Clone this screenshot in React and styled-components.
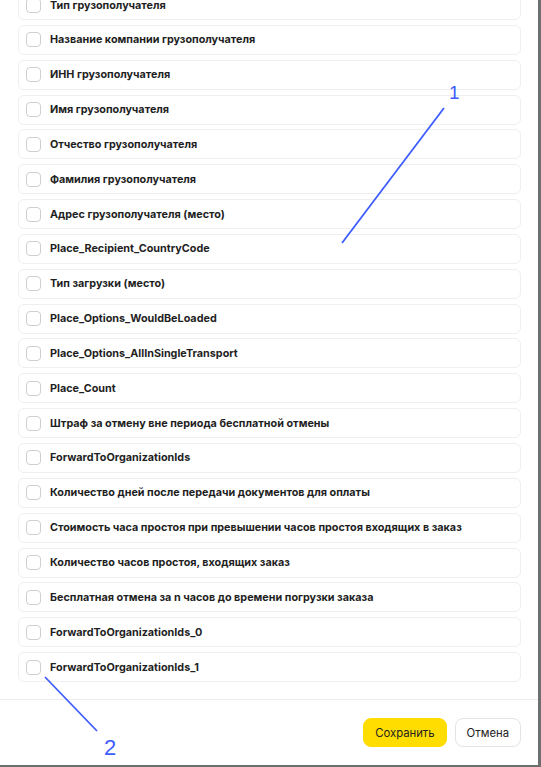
import React, { useEffect, useRef } from "react";
import styled, { createGlobalStyle } from "styled-components";

const GlobalStyle = createGlobalStyle`
  html, body {
    margin: 0;
    padding: 0;
    background: #6e6e6e;
    font-family: Inter, "Open Sans", "Liberation Sans", sans-serif;
  }
`;

const Modal = styled.div`
  position: relative;
  width: 538px;
  height: 765px;
  background: #ffffff;
  display: flex;
  flex-direction: column;
  overflow: hidden;
`;

const ScrollArea = styled.div`
  flex: 1;
  overflow: hidden;
  border-bottom: 1px solid #ececec;
`;

const FieldList = styled.div`
  display: flex;
  flex-direction: column;
  gap: 4.85px;
  padding: 0 17px 19px 18px;
`;

const FieldRow = styled.label`
  display: flex;
  align-items: center;
  gap: 9px;
  height: 30px;
  box-sizing: border-box;
  padding: 0 7px;
  border: 1px solid #efefef;
  border-radius: 6px;
  cursor: pointer;
`;

const Box = styled.span`
  width: 15px;
  height: 15px;
  box-sizing: border-box;
  border: 1px solid #cfcfcf;
  border-radius: 4px;
  flex: none;
  background: #fff;
`;

const FieldLabel = styled.span`
  font-size: 10.8px;
  font-weight: 700;
  color: #1f1f1f;
  white-space: nowrap;
`;

const Footer = styled.div`
  height: 65px;
  display: flex;
  align-items: center;
  justify-content: flex-end;
  gap: 8px;
  padding: 0 17px;
`;

const Button = styled.button`
  height: 29px;
  padding: 0 11px;
  border-radius: 8px;
  border: 1px solid ${p => (p.$primary ? "#ffdd00" : "#e4e4e4")};
  background: ${p => (p.$primary ? "#ffdd00" : "#ffffff")};
  color: #222;
  font-family: Inter, "Open Sans", sans-serif;
  font-size: 11.3px;
  font-weight: 400;
  cursor: pointer;
`;

const Annotations = styled.svg`
  position: absolute;
  left: 0;
  top: 0;
  width: 538px;
  height: 765px;
  pointer-events: none;
`;

const fields = [
  "Тип грузополучателя",
  "Название компании грузополучателя",
  "ИНН грузополучателя",
  "Имя грузополучателя",
  "Отчество грузополучателя",
  "Фамилия грузополучателя",
  "Адрес грузополучателя (место)",
  "Place_Recipient_CountryCode",
  "Тип загрузки (место)",
  "Place_Options_WouldBeLoaded",
  "Place_Options_AllInSingleTransport",
  "Place_Count",
  "Штраф за отмену вне периода бесплатной отмены",
  "ForwardToOrganizationIds",
  "Количество дней после передачи документов для оплаты",
  "Стоимость часа простоя при превышении часов простоя входящих в заказ",
  "Количество часов простоя, входящих заказ",
  "Бесплатная отмена за n часов до времени погрузки заказа",
  "ForwardToOrganizationIds_0",
  "ForwardToOrganizationIds_1"
];

const App = () => {
  const scrollRef = useRef(null);
  useEffect(() => {
    if (scrollRef.current) scrollRef.current.scrollTop = 10;
  }, []);

  return (
    <>
      <GlobalStyle />
      <Modal>
        <ScrollArea ref={scrollRef}>
          <FieldList>
            {fields.map((f, i) => (
              <FieldRow key={i}>
                <Box />
                <FieldLabel>{f}</FieldLabel>
              </FieldRow>
            ))}
          </FieldList>
        </ScrollArea>
        <Footer>
          <Button $primary>Сохранить</Button>
          <Button>Отмена</Button>
        </Footer>
        <Annotations viewBox="0 0 538 765">
          <line x1="342" y1="243" x2="444" y2="108" stroke="#3d5cff" strokeWidth="1.8" />
          <text x="449" y="99" fill="#3d5cff" fontSize="19" fontFamily="Liberation Sans, sans-serif">1</text>
          <line x1="45" y1="677" x2="97" y2="731" stroke="#3d5cff" strokeWidth="1.8" />
          <text x="104" y="755" fill="#3d5cff" fontSize="22" fontFamily="Liberation Sans, sans-serif">2</text>
        </Annotations>
      </Modal>
    </>
  );
};

export default App;
